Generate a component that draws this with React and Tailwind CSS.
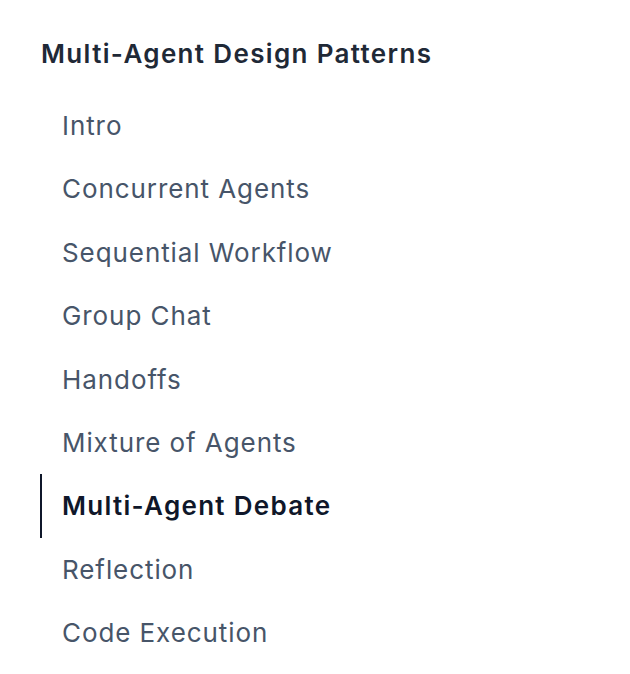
const items = [
  "Intro",
  "Concurrent Agents",
  "Sequential Workflow",
  "Group Chat",
  "Handoffs",
  "Mixture of Agents",
  "Multi-Agent Debate",
  "Reflection",
  "Code Execution",
];

function App() {
  const active = "Multi-Agent Debate";
  return (
    <div className="min-h-screen bg-white pl-[41px] pt-[36px] font-['Inter',sans-serif]">
      <div className="text-[26px] font-semibold leading-[36px] tracking-[1.35px] text-[#1f2937]">
        Multi-Agent Design Patterns
      </div>
      <ul className="mt-[22px] ml-[-1px]">
        {items.map((item) => (
          <li
            key={item}
            className={
              item === active
                ? "border-l-2 border-[#0f172a] pl-[20px] text-[26px] font-semibold leading-[63.4px] tracking-[1.3px] text-[#0f172a]"
                : "border-l-2 border-transparent pl-[20px] text-[26px] leading-[63.4px] tracking-[0.92px] text-[#475569]"
            }
          >
            {item}
          </li>
        ))}
      </ul>
    </div>
  );
}

export default App;
